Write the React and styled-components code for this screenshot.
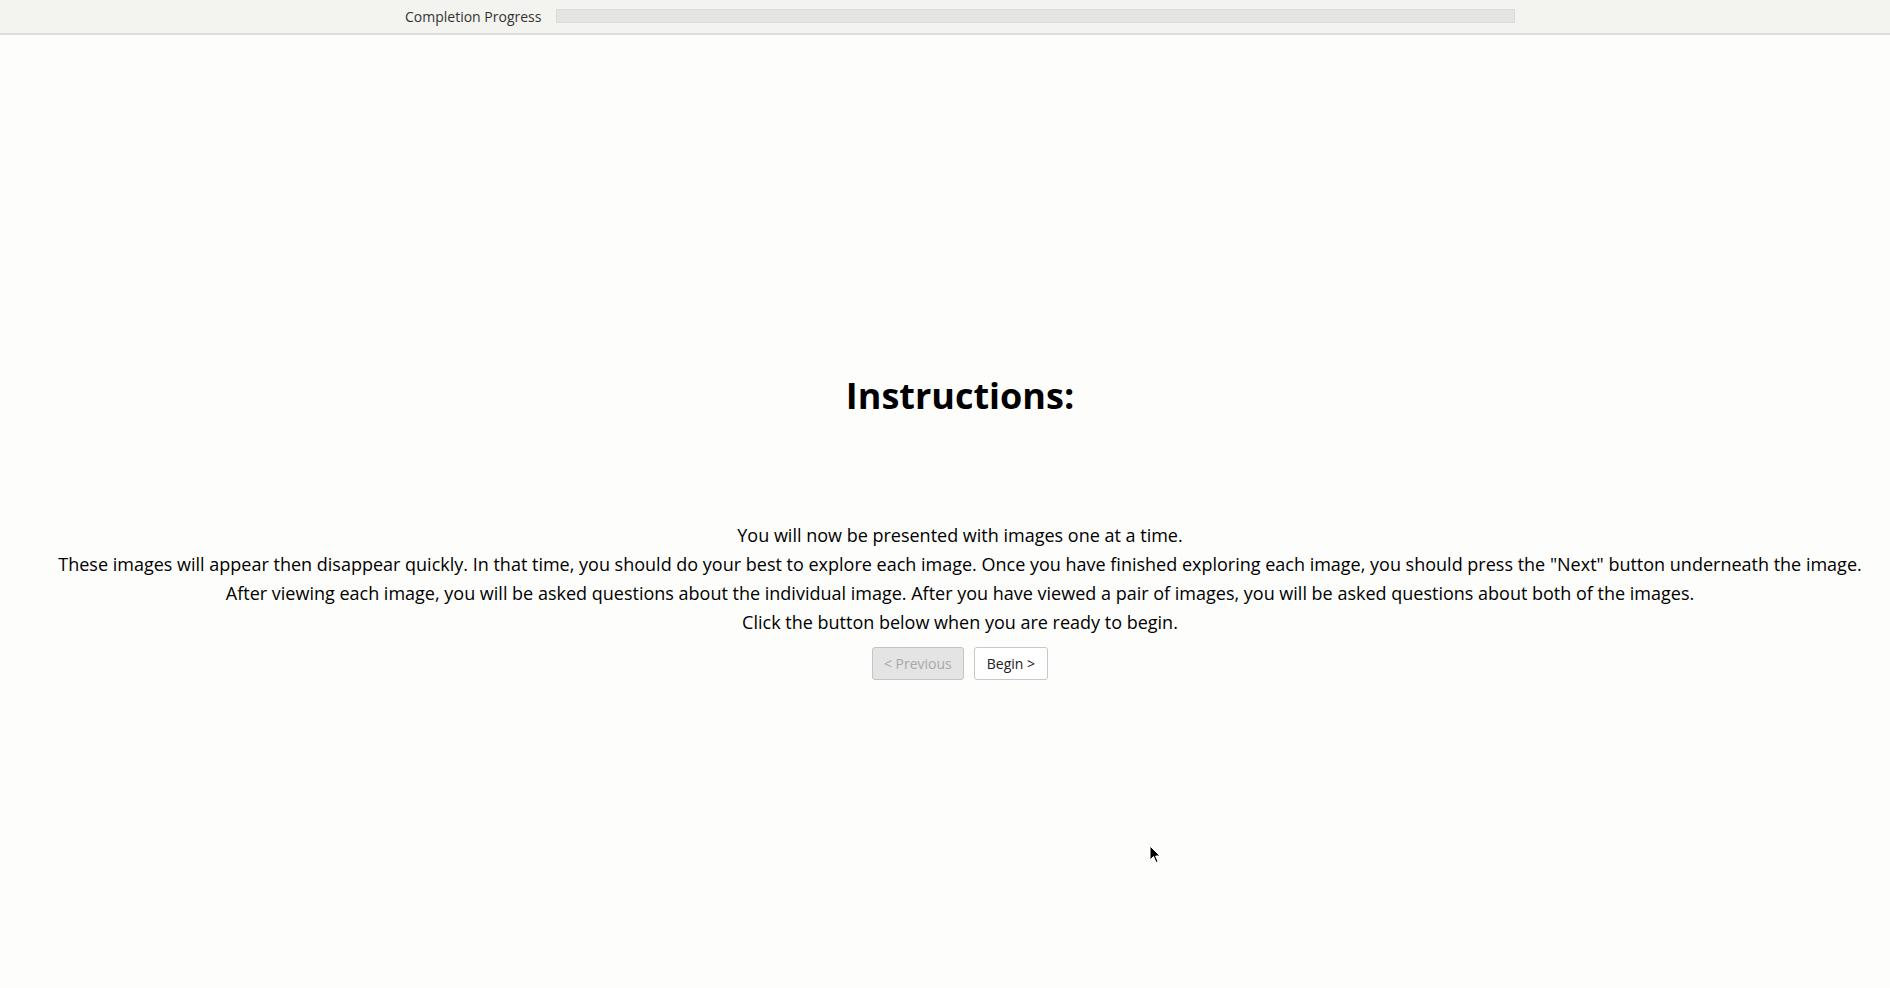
import React from 'react'
import styled, { createGlobalStyle } from 'styled-components'

const GlobalStyle = createGlobalStyle`
  html, body {
    margin: 0;
    padding: 0;
    background: #fdfdfb;
    font-family: 'Open Sans', 'Liberation Sans', sans-serif;
  }
`

const Page = styled.div`
  position: relative;
  width: 1890px;
  height: 988px;
  overflow: hidden;
  background: #fdfdfb;
`

const ProgressBarWrap = styled.div`
  height: 35px;
  background: #f3f3f0;
  border-bottom: 2px solid #dcdcdc;
  box-sizing: border-box;
  display: flex;
  justify-content: center;
  padding-left: 30px;
`

const ProgressInner = styled.div`
  width: 1110px;
  display: flex;
  align-items: center;
  gap: 15px;
`

const ProgressLabel = styled.span`
  font-size: 14px;
  color: #333;
  white-space: nowrap;
`

const ProgressTrack = styled.div`
  flex: 1;
  height: 14px;
  margin-bottom: 2px;
  background: #e4e4e2;
  border: 1px solid #dadada;
  box-sizing: border-box;
`

const Content = styled.div`
  padding-left: 30px;
  display: flex;
  flex-direction: column;
  align-items: center;
  text-align: center;
  color: #000;
`

const Heading = styled.h1`
  margin: 339px 0 0;
  font-size: 36px;
  font-weight: 700;
  line-height: 43px;
`

const Body = styled.div`
  margin-top: 104px;
  font-size: 18px;
  line-height: 29px;
`

const ButtonRow = styled.div`
  display: flex;
  gap: 10px;
  margin-top: 10px;
`

const NavButton = styled.button`
  height: 33px;
  padding: 0 ${p => (p.disabled ? '11px' : '12px')};
  font-family: 'Open Sans', 'Liberation Sans', sans-serif;
  font-size: 14px;
  border-radius: 3px;
  border: 1px solid ${p => (p.disabled ? '#c4c4c4' : '#c8c8c8')};
  background: ${p => (p.disabled ? '#e4e4e4' : '#fff')};
  color: ${p => (p.disabled ? '#a8a8a8' : '#222')};
  cursor: ${p => (p.disabled ? 'default' : 'pointer')};
`

const Cursor = styled.svg`
  position: absolute;
  left: 1149px;
  top: 845px;
`

export default function App() {
  return (
    <Page>
      <GlobalStyle />
      <ProgressBarWrap>
        <ProgressInner>
          <ProgressLabel>Completion Progress</ProgressLabel>
          <ProgressTrack />
        </ProgressInner>
      </ProgressBarWrap>
      <Content>
        <Heading>Instructions:</Heading>
        <Body>
          You will now be presented with images one at a time.<br />
          These images will appear then disappear quickly. In that time, you should do your best to explore each image. Once you have finished exploring each image, you should press the "Next" button underneath the image.<br />
          After viewing each image, you will be asked questions about the individual image. After you have viewed a pair of images, you will be asked questions about both of the images.<br />
          Click the button below when you are ready to begin.
        </Body>
        <ButtonRow>
          <NavButton disabled>&lt; Previous</NavButton>
          <NavButton>Begin &gt;</NavButton>
        </ButtonRow>
      </Content>
      <Cursor width="12" height="19" viewBox="0 0 12 19">
        <path d="M1 1 L1 15 L4.5 11.5 L7 17.5 L9 16.6 L6.6 11 L11 11 Z" fill="#000" stroke="#fff" strokeWidth="1" />
      </Cursor>
    </Page>
  )
}
